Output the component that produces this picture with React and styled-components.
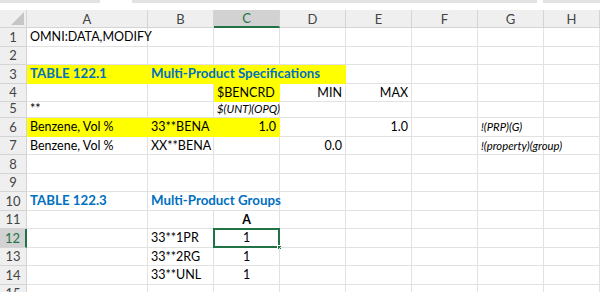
import React from "react";
import styled, { createGlobalStyle, css } from "styled-components";

const Global = createGlobalStyle`
  html, body { margin: 0; padding: 0; background: #ffffff; }
  body { font-family: Lato, "Liberation Sans", sans-serif; }
`;

const COLS = ["A", "B", "C", "D", "E", "F", "G", "H"];
const GRID_LINE = "#e2e2e2";
const HEAD_LINE = "#d4d4d4";
const GREEN = "#217346";
const YELLOW = "#ffff00";

const Page = styled.div`
  width: 600px;
  height: 292px;
  overflow: hidden;
  background: #fff;
`;

const TopStrip = styled.div`
  display: flex;
  height: 10px;
  align-items: flex-start;
`;

const StripSeg = styled.div`
  height: 3px;
  background: #e3e3e3;
  flex: ${(p) => (p.$grow ? 1 : "none")};
  width: ${(p) => (p.$w ? `${p.$w}px` : "auto")};
  margin-right: ${(p) => (p.$gap ? `${p.$gap}px` : 0)};
`;

const Sheet = styled.div`
  display: grid;
  grid-template-columns: 27px 121px 66px 66px 66px 66px 66px 66px 1fr;
  grid-template-rows: 18px repeat(4, 18.5px) 16px repeat(9, 18.5px) 18.5px;
  font-size: 12.5px;
  color: #000;
`;

const Corner = styled.div`
  background: #efefef;
  border-right: 1px solid ${HEAD_LINE};
  border-bottom: 1px solid ${HEAD_LINE};
  position: relative;
  &::after {
    content: "";
    position: absolute;
    right: 2px;
    bottom: 2px;
    width: 0;
    height: 0;
    border-left: 13px solid transparent;
    border-bottom: 13px solid #c6c6c6;
  }
`;

const ColHead = styled.div`
  background: ${(p) => (p.$active ? "#d2d2d2" : "#efefef")};
  color: ${(p) => (p.$active ? GREEN : "#444")};
  border-right: 1px solid ${HEAD_LINE};
  border-bottom: ${(p) => (p.$active ? `2px solid ${GREEN}` : `1px solid ${HEAD_LINE}`)};
  display: flex;
  align-items: center;
  justify-content: center;
  font-size: 13px;
  line-height: 1;
  padding-top: 1px;
  box-sizing: border-box;
`;

const RowHead = styled.div`
  background: ${(p) => (p.$active ? "#d2d2d2" : "#efefef")};
  color: ${(p) => (p.$active ? GREEN : "#444")};
  border-right: ${(p) => (p.$active ? `2px solid ${GREEN}` : `1px solid ${HEAD_LINE}`)};
  border-bottom: 1px solid ${HEAD_LINE};
  display: flex;
  align-items: flex-end;
  justify-content: center;
  padding-bottom: 2px;
  font-size: 13px;
  line-height: 1;
  box-sizing: border-box;
`;

const kinds = {
  title: css`
    font-weight: 700;
    font-size: 13.3px;
    color: #0070c0;
  `,
  note: css`
    font-style: italic;
    font-size: 11.3px;
    padding-bottom: 3px;
  `,
  bold: css`
    font-weight: 700;
  `,
};

const Cell = styled.div`
  grid-column: span ${(p) => p.$span || 1};
  background: ${(p) => (p.$fill ? YELLOW : "transparent")};
  border-right: 1px solid ${(p) => (p.$fill ? YELLOW : GRID_LINE)};
  border-bottom: 1px solid ${(p) => (p.$fill ? YELLOW : GRID_LINE)};
  display: flex;
  align-items: flex-end;
  justify-content: ${(p) =>
    p.$align === "right" ? "flex-end" : p.$align === "center" ? "center" : "flex-start"};
  padding: 0 3px 2px 3px;
  white-space: nowrap;
  line-height: 1;
  box-sizing: border-box;
  position: relative;
  min-width: 0;
  ${(p) => p.$kind && kinds[p.$kind]}
  ${(p) =>
    p.$selected &&
    css`
      &::before {
        content: "";
        position: absolute;
        left: -1px;
        top: -1px;
        right: -1px;
        bottom: -1px;
        border: 2px solid ${GREEN};
        pointer-events: none;
      }
      &::after {
        content: "";
        position: absolute;
        right: -3px;
        bottom: -3px;
        width: 5px;
        height: 5px;
        background: ${GREEN};
        border: 1px solid #fff;
        box-sizing: border-box;
      }
    `}
`;

const rows = [
  [{ t: "OMNI:DATA,MODIFY" }],
  [],
  [
    { t: "TABLE 122.1", fill: true, kind: "title" },
    { t: "Multi-Product Specifications", fill: true, kind: "title", span: 3 },
  ],
  [{}, {}, { t: "$BENCRD", fill: true }, { t: "MIN", align: "right" }, { t: "MAX", align: "right" }],
  [{ t: "**" }, {}, { t: "$(UNT)(OPQ)", kind: "note" }],
  [
    { t: "Benzene, Vol %", fill: true },
    { t: "33**BENA", fill: true },
    { t: "1.0", fill: true, align: "right" },
    {},
    { t: "1.0", align: "right" },
    {},
    { t: "!(PRP)(G)", kind: "note" },
  ],
  [
    { t: "Benzene, Vol %" },
    { t: "XX**BENA" },
    {},
    { t: "0.0", align: "right" },
    {},
    {},
    { t: "!(property)(group)", kind: "note" },
  ],
  [],
  [],
  [{ t: "TABLE 122.3", kind: "title" }, { t: "Multi-Product Groups", kind: "title", span: 2 }],
  [{}, {}, { t: "A", kind: "bold", align: "center" }],
  [{}, { t: "33**1PR" }, { t: "1", align: "center", selected: true }],
  [{}, { t: "33**2RG" }, { t: "1", align: "center" }],
  [{}, { t: "33**UNL" }, { t: "1", align: "center" }],
  [],
];

function fillRow(cells) {
  const out = [];
  let used = 0;
  cells.forEach((c) => {
    out.push(c);
    used += c.span || 1;
  });
  while (used < COLS.length) {
    out.push({});
    used += 1;
  }
  return out;
}

export default function App() {
  return (
    <Page>
      <Global />
      <TopStrip>
        <StripSeg $w={100} $gap={32} />
        <StripSeg $w={405} $gap={6} />
        <StripSeg $grow />
      </TopStrip>
      <Sheet>
        <Corner />
        {COLS.map((c) => (
          <ColHead key={c} $active={c === "C"}>
            {c}
          </ColHead>
        ))}
        {rows.map((r, ri) => {
          const n = ri + 1;
          return (
            <React.Fragment key={n}>
              <RowHead $active={n === 12}>{n}</RowHead>
              {fillRow(r).map((c, ci) => (
                <Cell
                  key={ci}
                  $span={c.span}
                  $fill={c.fill}
                  $align={c.align}
                  $kind={c.kind}
                  $selected={c.selected}
                >
                  {c.t}
                </Cell>
              ))}
            </React.Fragment>
          );
        })}
      </Sheet>
    </Page>
  );
}
